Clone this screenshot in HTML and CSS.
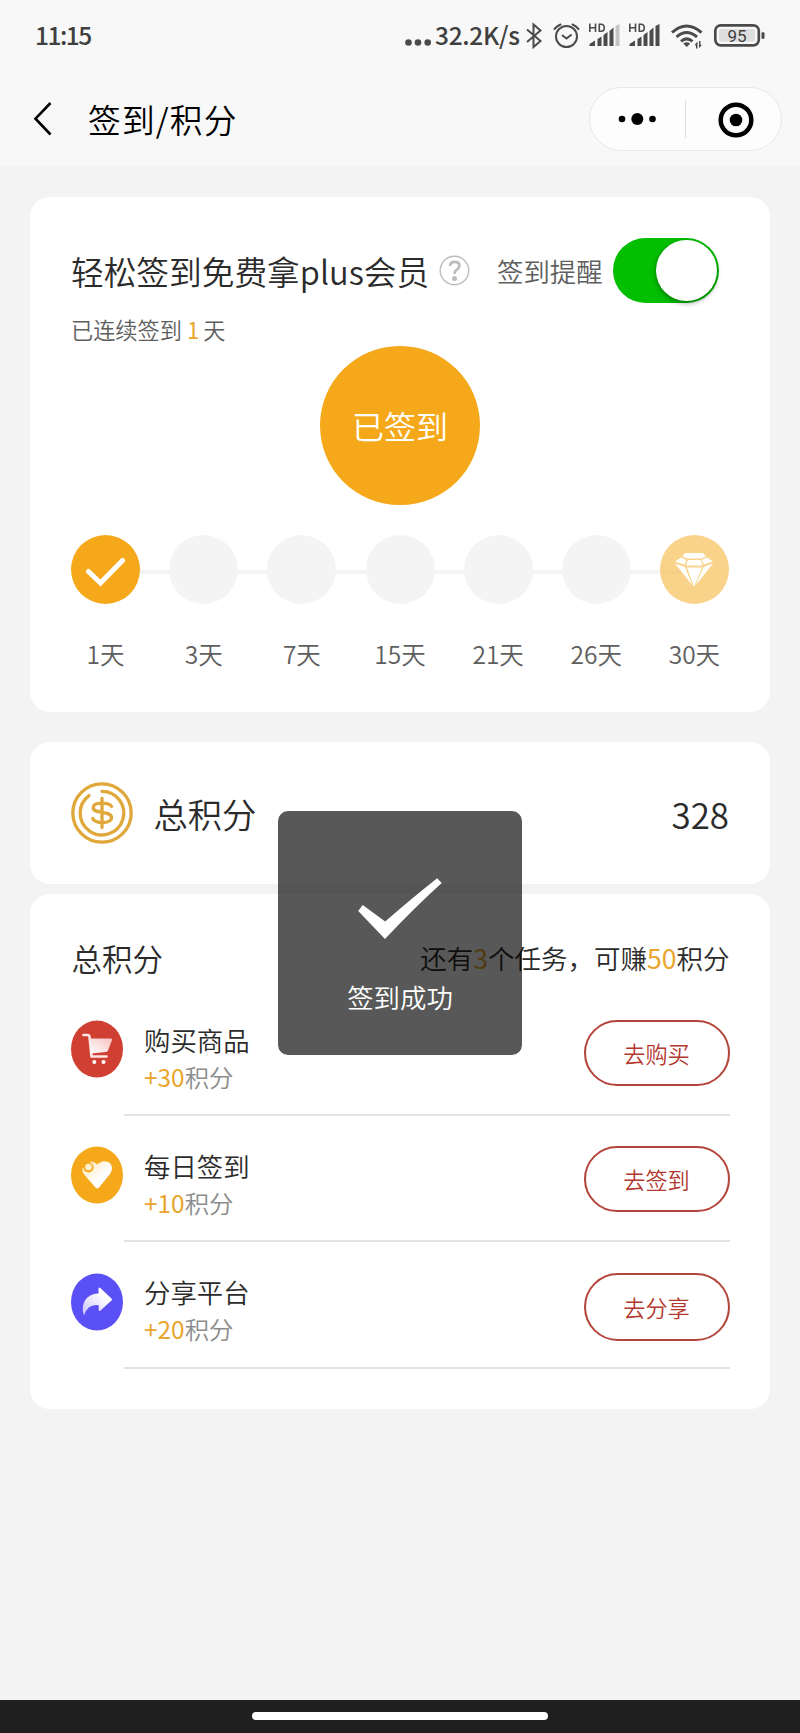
FILE: index.html
```html
<!DOCTYPE html>
<html lang="zh-CN">
<head>
<meta charset="utf-8">
<title>签到/积分</title>
<link rel="stylesheet" href="styles.css">
</head>
<body>
<div class="screen">
  <header class="header">
    <div class="status">
      <span class="clock">11:15</span>
      <div class="status-right">
        <svg class="dots" width="28" height="30" viewBox="404 20 28 30"><g fill="#4b4b4b"><circle cx="408.500" cy="42.500" r="3.300"/><circle cx="418" cy="42.500" r="3.300"/><circle cx="427.700" cy="42.500" r="3.300"/></g></svg>
        <span class="speed">32.2K/s</span>
        <svg width="18" height="30" viewBox="525 20 18 30"><path d="M527 29.500L540.500 41L533.500 47V24.500L540.500 30.500L527 42" fill="none" stroke="#4b4b4b" stroke-width="2"/></svg>
        <svg class="alarm" width="28" height="30" viewBox="552 20 28 30"><g fill="none" stroke="#4b4b4b" stroke-width="2" stroke-linecap="round"><circle cx="566.500" cy="36.500" r="10.500"/><path d="M554.500 29Q557 26 560.500 24.500M572.500 24.500Q576 26 578.500 29M562.500 35.500L566.500 38.500L571 35"/></g></svg>
        <svg class="signal" width="32" height="30" viewBox="588 20 32 30"><g fill="none" stroke="#4b4b4b" stroke-width="1.600"><path d="M589.800 23.500V32M595.500 23.500V32M589.800 27.800H595.500M599.300 24.300V31.200H601Q604.300 31.200 604.300 27.800T601 24.300Z"/></g><path fill="#4b4b4b" d="M589.500 46V44L595 40.500V46ZM597.500 46V39L601.500 36.500V46ZM603.500 46V35L607.500 32V46ZM609.500 46V31L613.500 27.500V46Z"/><path fill="#c4c4c4" d="M615.500 46V26L619.500 24V46Z"/></svg>
        <svg class="signal" width="32" height="30" viewBox="588 20 32 30"><g fill="none" stroke="#4b4b4b" stroke-width="1.600"><path d="M589.800 23.500V32M595.500 23.500V32M589.800 27.800H595.500M599.300 24.300V31.200H601Q604.300 31.200 604.300 27.800T601 24.300Z"/></g><path fill="#4b4b4b" d="M589.500 46V44L595 40.500V46ZM597.500 46V39L601.500 36.500V46ZM603.500 46V35L607.500 32V46ZM609.500 46V31L613.500 27.500V46ZM615.500 46V26L619.500 24V46Z"/></svg>
        <svg class="wifi" width="34" height="30" viewBox="670 20 34 30"><g fill="none" stroke="#4b4b4b" stroke-width="3"><path d="M672 32.500Q686.500 19.500 701.500 32.500M676.500 37Q686.500 28 697 37M681 41.300Q686.700 36.500 692.500 41.300"/></g><path fill="#4b4b4b" d="M683.300 43.500Q686.700 41 690.200 43.500L686.700 47ZM695 44.500L697.500 41.500V48.500H696V45.500H695ZM699 41V48L702 45H700.500V41Z"/></svg>
        <svg class="battery" width="52" height="30" viewBox="713 20 52 30"><rect x="715.300" y="25.300" width="43.500" height="20" rx="5.500" fill="none" stroke="#4b4b4b" stroke-width="2.700"/><rect x="719" y="29" width="36" height="12.800" rx="2" fill="#dedede"/><rect x="761.500" y="32" width="3" height="7" rx="1.500" fill="#4b4b4b"/><text x="737" y="41.900" text-anchor="middle" class="battery-text">95</text></svg>
      </div>
    </div>
    <div class="nav">
      <svg class="back" width="20" height="36" viewBox="33 101 20 36"><path d="M50.500 103L35.500 118.700L50.500 134.500" fill="none" stroke="#000" stroke-width="2.600"/></svg>
      <h1 class="nav-title">签到/积分</h1>
      <div class="capsule">
        <svg class="more" width="40" height="14" viewBox="0 0 40 14"><circle cx="4" cy="7" r="3.300"/><circle cx="19.300" cy="7" r="6"/><circle cx="34.500" cy="7" r="3.300"/></svg>
        <span class="capsule-line"></span>
        <svg class="close" width="36" height="36" viewBox="0 0 36 36"><circle cx="18" cy="18" r="15.300" fill="none" stroke="#000" stroke-width="4.500"/><circle cx="18" cy="18" r="6.300"/></svg>
      </div>
    </div>
  </header>

  <main class="main">
    <section class="card sign">
      <div class="sign-head">
        <h2 class="sign-title">轻松签到免费拿plus会员</h2>
        <svg class="help" width="31" height="31" viewBox="0 0 31 31"><circle cx="15.500" cy="15.500" r="14.300" fill="none" stroke="#bdbdbd" stroke-width="1.400"/><path d="M11 11Q11.200 6.800 15.800 6.800Q20.400 6.800 20.400 10.800Q20.400 13 17.500 14.800Q15.500 16 15.500 19" fill="none" stroke="#bdbdbd" stroke-width="2.700"/><circle cx="15.500" cy="23.500" r="2.500" fill="#bdbdbd"/></svg>
        <span class="remind">签到提醒</span>
        <span class="switch"><span class="knob"></span></span>
      </div>
      <p class="streak">已连续签到<b>1</b>天</p>
      <div class="done">已签到</div>
      <ol class="steps">
        <li class="step"><span class="dot dot-on"><svg width="42" height="32" viewBox="0 0 42 32"><path d="M3.500 15.500L15.500 27L37.500 4.500" fill="none" stroke="#fff" stroke-width="5" stroke-linecap="round"/></svg></span><span class="day">1天</span></li>
        <li class="step"><span class="dot"></span><span class="day">3天</span></li>
        <li class="step"><span class="dot"></span><span class="day">7天</span></li>
        <li class="step"><span class="dot"></span><span class="day">15天</span></li>
        <li class="step"><span class="dot"></span><span class="day">21天</span></li>
        <li class="step"><span class="dot"></span><span class="day">26天</span></li>
        <li class="step"><span class="dot dot-gem"><svg width="38" height="36" viewBox="0 0 38 36"><path fill="#fff" d="M10 1H28L31 4.500L26 6.500H12L7.500 4.500ZM6 5.500L11.500 8L9.500 12.500L0 9.500ZM32 5.500L38 9.500L29 12.500L26.500 8ZM13 8H25.500L27.500 13.500H11ZM0 11.500L10 15L17.500 33.500ZM38 11.500L28.500 15L20.500 33.500ZM12 15.500H27L19 35Z"/></svg></span><span class="day">30天</span></li>
      </ol>
    </section>

    <section class="card total">
      <svg class="coin" width="62" height="62" viewBox="0 0 62 62"><g fill="none" stroke="#e0a73a" stroke-width="3.300" stroke-linecap="round"><circle cx="31" cy="31" r="29.200"/><path d="M31 9.300A21.800 21.800 0 1 1 18 13.600" /><path d="M31 16.500V45.500M40.500 24.500C39 20.500 22.500 19 22.200 25.700C22 32 40.500 28.500 40.500 35.500C40.500 42.500 23 41.500 21.700 36.500"/></g></svg>
      <h2 class="total-label">总积分</h2>
      <span class="total-value">328</span>
    </section>

    <section class="card tasks">
      <div class="tasks-head">
        <h2 class="tasks-title">总积分</h2>
        <p class="tasks-note">还有<b>3</b>个任务，可赚<b>50</b>积分</p>
      </div>
      <ul class="list">
        <li class="task">
          <svg class="task-icon" width="52" height="58" viewBox="0 0 52 58"><defs><linearGradient id="g1" x1="1" y1="0" x2="0" y2="1"><stop offset="0" stop-color="#f6c3c0"/><stop offset="1" stop-color="#fff"/></linearGradient></defs><ellipse cx="26" cy="29" rx="26" ry="28.500" fill="#cf4032"/><path d="M12.500 15H17Q18.300 15 18.500 16.500L20.500 36.500H35.500" fill="none" stroke="#fbe6e4" stroke-width="2.600" stroke-linecap="round" stroke-linejoin="round"/><path d="M18 18.500H40Q41.300 18.500 41 20L37 30.500Q36.500 31.800 35 32L20 33.500Z" fill="url(#g1)"/><circle cx="23.300" cy="42" r="2" fill="#fff"/><circle cx="32.500" cy="42" r="2" fill="#fff"/></svg>
          <div class="task-body">
            <div class="task-text"><h3 class="task-name">购买商品</h3><p class="task-points"><b>+30</b>积分</p></div>
            <button class="task-btn">去购买</button>
          </div>
        </li>
        <li class="task">
          <svg class="task-icon" width="52" height="58" viewBox="0 0 52 58"><defs><linearGradient id="g2" x1="0" y1="0" x2="1" y2="1"><stop offset="0" stop-color="#fde3b0"/><stop offset=".6" stop-color="#fff"/></linearGradient></defs><ellipse cx="26" cy="29" rx="26" ry="28.500" fill="#f5a91a"/><path d="M20 15.500Q23 15.500 26.500 18.500Q29 15.500 33.500 15.300Q40.500 15.300 41 22Q41 25 39 28L28 41.500Q26.300 43.300 24.500 41.500L13.500 29Q11 26 11.300 22.500Z" fill="url(#g2)"/><circle cx="17.500" cy="21.500" r="5" fill="#f5a91a"/><circle cx="17.500" cy="21" r="3.300" fill="#fff0d2"/></svg>
          <div class="task-body">
            <div class="task-text"><h3 class="task-name">每日签到</h3><p class="task-points"><b>+10</b>积分</p></div>
            <button class="task-btn">去签到</button>
          </div>
        </li>
        <li class="task">
          <svg class="task-icon" width="52" height="58" viewBox="0 0 52 58"><defs><linearGradient id="g3" x1="0" y1="1" x2="1" y2="0"><stop offset="0" stop-color="#c9c3fb"/><stop offset=".7" stop-color="#fff"/></linearGradient></defs><ellipse cx="26" cy="29" rx="26" ry="28.500" fill="#5b50f5"/><path d="M27.500 15.500Q27.800 14 29.300 15L40.500 25.500Q41.500 26.500 40.500 27.500L29.500 37.500Q28 38.500 27.700 37V32.300Q17 30.500 13 42.500Q11 38 12 33Q14.500 21 27.500 20.500Z" fill="url(#g3)"/></svg>
          <div class="task-body">
            <div class="task-text"><h3 class="task-name">分享平台</h3><p class="task-points"><b>+20</b>积分</p></div>
            <button class="task-btn">去分享</button>
          </div>
        </li>
      </ul>
    </section>
  </main>

  <footer class="gesture"><span class="pill"></span></footer>

  <div class="toast">
    <svg width="86" height="64" viewBox="357 877 86 64"><path fill="#fff" d="M358.200 911L362.700 905L385.200 921.500Q412 898 437.200 878.200L441.700 883Q413 909 385 939Z"/></svg>
    <span class="toast-text">签到成功</span>
  </div>
</div>
</body>
</html>
```

FILE: styles.css
```css
* { box-sizing: border-box; }
body {
  margin: 0;
  font-family: "Noto Sans CJK SC", "Noto Sans", sans-serif;
  font-weight: 350;
  color: #2b2b2b;
}
h1, h2, h3, p, ol, ul { margin: 0; padding: 0; font-weight: inherit; list-style: none; }
b { font-weight: 400; color: #e9a52c; }
svg { display: block; flex: none; }

.screen {
  position: relative;
  display: flex;
  flex-direction: column;
  width: 800px;
  height: 1733px;
  overflow: hidden;
  background: #f3f3f3;
}

/* status bar and navigation */
.header { height: 166px; background: #f8f8f8; }
.status { display: flex; justify-content: space-between; height: 70px; padding: 20px 35px 0; color: #404040; }
.clock { font-size: 24.500px; line-height: 30px; font-weight: 500; letter-spacing: -1.500px; }
.status-right { display: flex; }
.speed { width: 93px; padding-left: 3px; font-size: 24.500px; line-height: 30px; font-weight: 500; letter-spacing: -.3px; white-space: nowrap; }
.alarm { margin-left: 9px; }
.signal { margin-left: 8px; }
.wifi { margin-left: 10px; }
.battery { margin-left: 9px; }
.battery-text { font: 400 17px Roboto, sans-serif; fill: #404040; }
.nav { display: flex; align-items: center; height: 98px; padding: 0 18px 0 33px; }
.nav-title { margin: -1px 0 0 35px; font-size: 32.700px; line-height: 44px; letter-spacing: 1.200px; color: #000; font-weight: 350; }
.capsule {
  display: flex;
  align-items: center;
  width: 193px;
  height: 64px;
  margin-left: auto;
  padding-left: 28px;
  border: 1px solid #e8e8e8;
  border-radius: 32px;
  background: #fdfdfd;
}
.capsule-line { width: 1px; height: 38px; margin-left: 27px; background: #dedede; }
.close { margin: 1px 0 0 32px; }

/* cards */
.main { display: flex; flex-direction: column; flex: 1; padding: 31px 30px 0; }
.card { border-radius: 20px; background: #fff; }

.sign { height: 514.500px; padding: 40px 41px 0; }
.sign-head { display: flex; align-items: center; height: 66px; }
.sign-title { width: 368px; padding-top: 1px; font-size: 32.700px; line-height: 44px; white-space: nowrap; }
.help { margin-top: 1px; }
.remind { margin-left: 27px; padding-top: 1px; color: #5e5e5e; font-size: 26.400px; line-height: 36px; }
.switch { display: flex; justify-content: flex-end; align-items: center; width: 106px; height: 65px; margin-left: 10px; padding-right: 2px; border-radius: 33px; background: #04be02; }
.knob { width: 61px; height: 61px; border-radius: 50%; background: #fff; box-shadow: 0 2px 5px rgba(0, 0, 0, .4); }
.streak { height: 42.500px; padding: 10px 0 0; color: #5e5e5e; font-size: 22.200px; line-height: 32px; }
.streak b { margin: 0 4px 0 5px; }
.done { width: 159.500px; height: 159.500px; margin: 0 auto; border-radius: 50%; background: #f5a91a; color: #fff; font-size: 32px; line-height: 159px; text-align: center; }
.steps { display: grid; grid-template-columns: repeat(7, 98.150px); justify-content: center; margin-top: 30px; background: linear-gradient(#f4f4f4, #f4f4f4) 50% 35px / 588px 4px no-repeat; }
.step { display: flex; flex-direction: column; align-items: center; }
.dot { display: flex; align-items: center; justify-content: center; width: 69px; height: 69px; border-radius: 50%; background: #f4f4f4; }
.dot-on { background: #f5a91a; }
.dot-on svg { margin-top: 4px; }
.dot-gem { background: rgba(246, 184, 66, .62); }
.day { margin-top: 31.500px; color: #5e5e5e; font-size: 24.500px; line-height: 36px; }

.total { display: flex; align-items: center; height: 142px; margin-top: 30.500px; padding: 0 41px; }
.total-label { margin-left: 20.500px; font-size: 34.300px; line-height: 46px; }
.total-value { margin-left: auto; padding-top: 1px; font-size: 34.900px; line-height: 46px; }

.tasks { height: 515px; margin-top: 10px; padding: 0 40.500px 0 41px; }
.tasks-head { display: flex; align-items: center; justify-content: space-between; height: 126px; padding: 1px 0 0 .5px; }
.tasks-title { font-size: 30.500px; line-height: 40px; }
.tasks-note { font-size: 26.500px; line-height: 36px; }
.task { display: flex; height: 126.400px; }
.task-body { display: flex; justify-content: space-between; flex: 1; height: 96px; margin-left: 1px; padding-left: 20px; border-bottom: 2px solid #e3e3e3; }
.task-name { margin-top: 1.500px; font-size: 26.400px; line-height: 36px; }
.task-points { color: #8c8c8c; font-size: 24.400px; line-height: 37px; }
.task-btn { width: 146px; height: 66px; padding: 0; border: 2px solid #b3443a; border-radius: 34px; background: none; color: #b3392f; font: inherit; font-size: 22.200px; }
.task:last-child .task-btn { height: 68px; }

.gesture { display: flex; justify-content: center; height: 33px; padding-top: 12px; background: #1f1f1f; }
.pill { width: 296px; height: 8px; border-radius: 4px; background: #fff; }

/* success message over the page */
.toast {
  position: absolute;
  left: 278px;
  top: 811px;
  display: flex;
  flex-direction: column;
  align-items: center;
  width: 244px;
  height: 244px;
  padding-top: 66px;
  border-radius: 10px;
  background: rgba(0, 0, 0, .655);
  color: #fff;
}
.toast-text { margin-top: 38px; font-size: 26.400px; line-height: 36px; font-weight: 350; }
```
